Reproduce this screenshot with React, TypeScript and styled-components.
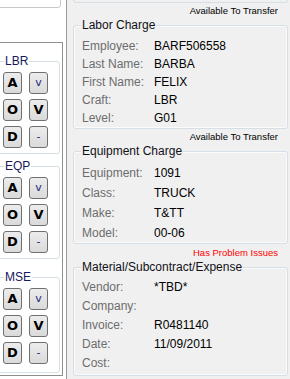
import React from 'react'
import styled, { createGlobalStyle } from 'styled-components'

const Global = createGlobalStyle`
  html, body {
    margin: 0;
    padding: 0;
  }
  body {
    background: #f0f0f0;
    font-family: "Liberation Sans", Arial, sans-serif;
  }
`;

const Screen = styled.div`
  display: flex;
  width: 290px;
  height: 379px;
  overflow: hidden;
`;

const LeftPane = styled.div`
  width: 66px;
  flex: none;
  background: #ffffff;
  border-right: 1px solid #9c9c9c;
  overflow: hidden;
`;

const TopBox = styled.div`
  margin: -20px 0 0 -10px;
  width: 71px;
  height: 28px;
  box-sizing: border-box;
  border: 1px solid #c8c8c8;
  border-radius: 3px;
`;

const OuterBox = styled.div`
  margin: 34px 0 0 -10px;
  width: 73px;
  height: 334px;
  box-sizing: border-box;
  border: 1px solid #8f8f8f;
  padding: 0 2px 0 0;
`;

const ButtonGroup = styled.div<{ $mt: number; $h: number }>`
  position: relative;
  margin-top: ${p => p.$mt}px;
  height: ${p => p.$h}px;
  box-sizing: border-box;
  border: 1px solid #d5dfe5;
  border-radius: 3px;
  padding: 10px 0 0 11px;
  display: grid;
  grid-template-columns: 19px 19px;
  grid-auto-rows: 22px;
  column-gap: 7px;
  row-gap: 5px;
  align-content: start;
`;

const SideLegend = styled.span`
  position: absolute;
  top: -8px;
  left: 12px;
  padding: 0 1px;
  background: #ffffff;
  font-size: 12px;
  line-height: 14px;
  color: #18185a;
`;

const ActionButton = styled.button<{ $small?: boolean }>`
  width: 19px;
  height: 22px;
  padding: 0;
  margin: 0;
  box-sizing: border-box;
  border: 1px solid #707070;
  border-radius: 3px;
  background: linear-gradient(#ececec, #dadada);
  font-family: "DejaVu Sans", Verdana, sans-serif;
  font-size: ${p => (p.$small ? '11px' : '13px')};
  font-weight: ${p => (p.$small ? 400 : 700)};
  color: ${p => (p.$small ? '#1e2a78' : '#000000')};
  line-height: 20px;
  text-align: center;
`;

const RightPane = styled.div`
  flex: 1;
  padding: 0 2px 0 6px;
  background: #f0f0f0;
`;

const GroupTail = styled.div`
  margin-top: -20px;
  height: 23px;
  box-sizing: border-box;
  border: 1px solid #d5dfe5;
  border-radius: 3px;
`;

const Status = styled.div<{ $h: number; $pt: number; $color: string }>`
  height: ${p => p.$h}px;
  box-sizing: border-box;
  padding: ${p => p.$pt}px 10px 0 0;
  text-align: right;
  font-size: 9.5px;
  line-height: 12px;
  color: ${p => p.$color};
`;

const InfoGroup = styled.div<{ $pt: number; $pb: number }>`
  position: relative;
  border: 1px solid #d5dfe5;
  border-radius: 3px;
  box-shadow: inset 0 0 0 1px #fbfbfb;
  padding: ${p => p.$pt}px 0 ${p => p.$pb}px 8px;
`;

const Legend = styled.span`
  position: absolute;
  top: -8px;
  left: 7px;
  padding: 0 1px;
  background: #f0f0f0;
  font-size: 12px;
  line-height: 14px;
  color: #101018;
`;

const Row = styled.div<{ $pitch: number }>`
  display: grid;
  grid-template-columns: 72px 1fr;
  height: ${p => p.$pitch}px;
  line-height: ${p => p.$pitch}px;
  font-size: 12px;
  white-space: nowrap;
`;

const Label = styled.span`
  color: #6d6d6d;
`;

const Value = styled.span`
  color: #000000;
`;

const groups = [
  { name: 'LBR', mt: 18, h: 93 },
  { name: 'EQP', mt: 12, h: 93 },
  { name: 'MSE', mt: 18, h: 96 },
];

const buttons = [
  { text: 'A', small: false },
  { text: 'v', small: true },
  { text: 'O', small: false },
  { text: 'V', small: false },
  { text: 'D', small: false },
  { text: '-', small: true },
];

const sections = [
  {
    status: 'Available To Transfer', statusColor: '#000000', sh: 22, spt: 2,
    title: 'Labor Charge', pitch: 18, pt: 11, pb: 1,
    rows: [
      ['Employee:', 'BARF506558'],
      ['Last Name:', 'BARBA'],
      ['First Name:', 'FELIX'],
      ['Craft:', 'LBR'],
      ['Level:', 'G01'],
    ],
  },
  {
    status: 'Available To Transfer', statusColor: '#000000', sh: 22, spt: 2,
    title: 'Equipment Charge', pitch: 20, pt: 11, pb: 0,
    rows: [
      ['Equipment:', '1091'],
      ['Class:', 'TRUCK'],
      ['Make:', 'T&TT'],
      ['Model:', '00-06'],
    ],
  },
  {
    status: 'Has Problem Issues', statusColor: '#ff0000', sh: 23, spt: 3,
    title: 'Material/Subcontract/Expense', pitch: 19, pt: 10, pb: 2,
    rows: [
      ['Vendor:', '*TBD*'],
      ['Company:', ''],
      ['Invoice:', 'R0481140'],
      ['Date:', '11/09/2011'],
      ['Cost:', ''],
    ],
  },
];

export default function App() {
  return (
    <Screen>
      <Global />
      <LeftPane>
        <TopBox />
        <OuterBox>
          {groups.map(g => (
            <ButtonGroup key={g.name} $mt={g.mt} $h={g.h}>
              <SideLegend>{g.name}</SideLegend>
              {buttons.map((b, i) => (
                <ActionButton key={i} $small={b.small}>{b.text}</ActionButton>
              ))}
            </ButtonGroup>
          ))}
        </OuterBox>
      </LeftPane>
      <RightPane>
        <GroupTail />
        {sections.map(s => (
          <React.Fragment key={s.title}>
            <Status $h={s.sh} $pt={s.spt} $color={s.statusColor}>{s.status}</Status>
            <InfoGroup $pt={s.pt} $pb={s.pb}>
              <Legend>{s.title}</Legend>
              {s.rows.map(([label, value]) => (
                <Row key={label} $pitch={s.pitch}>
                  <Label>{label}</Label>
                  <Value>{value}</Value>
                </Row>
              ))}
            </InfoGroup>
          </React.Fragment>
        ))}
      </RightPane>
    </Screen>
  )
}
